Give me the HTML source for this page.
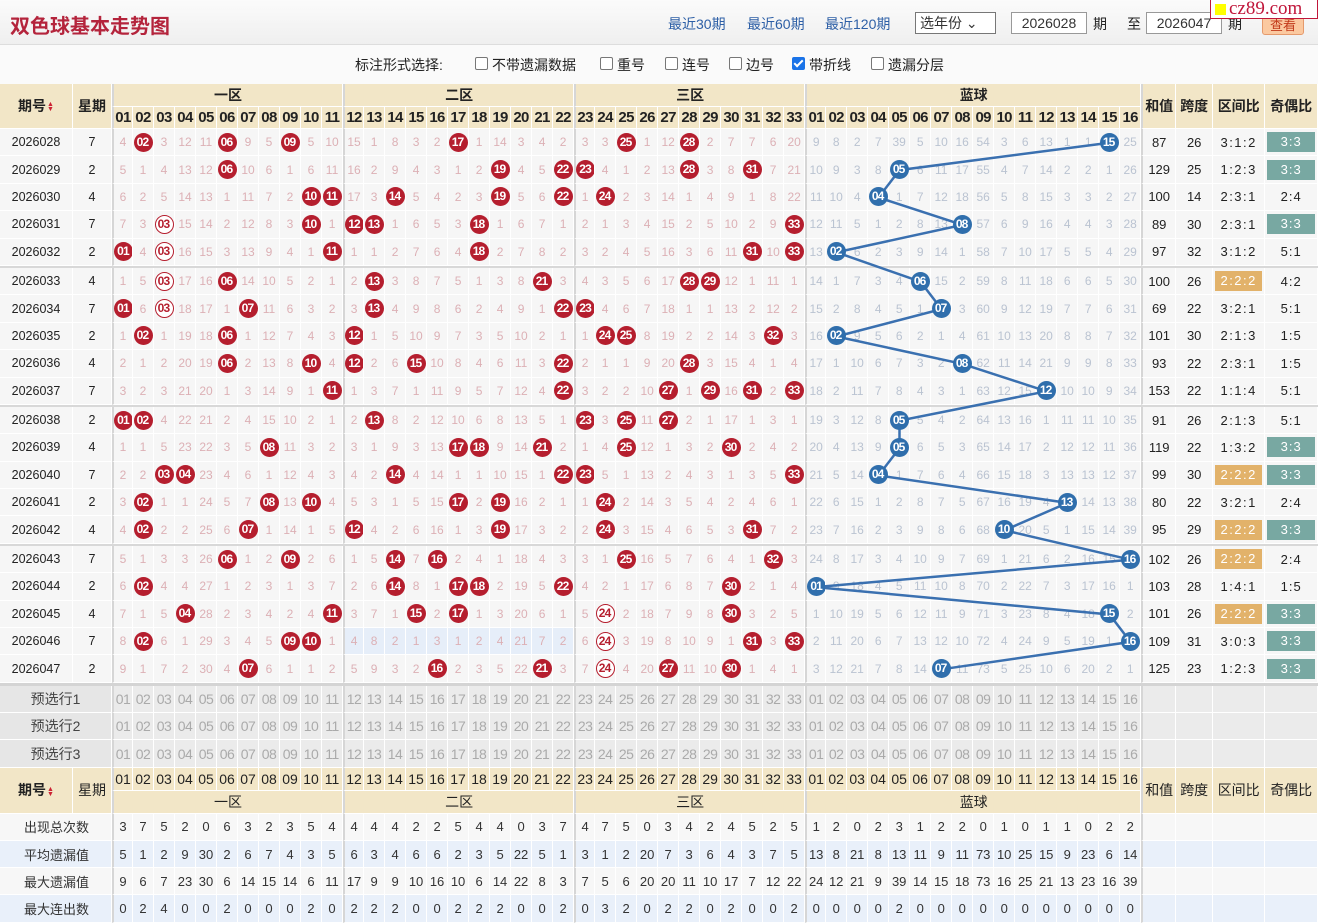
<!DOCTYPE html>
<html><head><meta charset="utf-8">
<style>
body{margin:0;width:1318px;height:923px;overflow:hidden;background:#fff;font-family:"Liberation Sans","Noto Sans CJK SC",sans-serif;position:relative;color:#333}
#top{position:absolute;left:0;top:0;width:1318px;height:44px;background:linear-gradient(#fbfbfb,#efefef);border-bottom:1px solid #ddd}
#title{position:absolute;left:10px;top:10px;font-size:20px;font-weight:bold;color:#b4243c;letter-spacing:0px}
.lk{position:absolute;top:14px;font-size:14px;color:#2d5fa6}
.sel{position:absolute;left:915px;top:12px;width:75px;height:20px;border:1px solid #777;background:#fff;font-size:14px;line-height:20px;padding-left:4px;box-sizing:content-box}
.inp{position:absolute;top:12px;width:74px;height:20px;border:1px solid #999;background:#fff;font-size:14px;line-height:20px;text-align:center}
.tx{position:absolute;top:14px;font-size:14px;color:#222}
#btn{position:absolute;left:1262px;top:16px;width:40px;height:17px;background:#fbc9a0;border:1px solid #e59a6c;border-radius:3px;color:#c23a1a;font-size:13px;text-align:center;line-height:17px}
#wm{position:absolute;left:1210px;top:0;width:106px;height:18px;background:#fff;border:1px solid #c0163a;border-top:none;color:#c0163a;font-family:"Liberation Serif",serif;font-size:19px;line-height:18px}
#wm .sq{display:inline-block;width:11px;height:11px;background:#ff0;margin:0 3px 0 4px;vertical-align:-1px}
#opt{position:absolute;left:0;top:45px;width:1318px;height:39px;background:#fafafa;font-size:14px;color:#222}
#opt span{position:absolute;top:10px}
.cb{display:inline-block;width:11px;height:11px;border:1px solid #777;border-radius:2px;background:#fff;vertical-align:0px;margin-right:4px;font-style:normal;position:relative}
.cb.on{background:#1a73e8;border-color:#1a73e8}
.cb.on:after{content:"";position:absolute;left:3px;top:0px;width:3px;height:7px;border:solid #fff;border-width:0 2px 2px 0;transform:rotate(45deg)}
table{position:absolute;left:0;top:84px;border-collapse:separate;border-spacing:0;table-layout:fixed;width:1318px}
td{padding:0;text-align:center;overflow:hidden;white-space:nowrap;border-right:1px solid #fff;border-bottom:1px solid #fff;font-size:12px}
tr.h td{background:#f2e6c7;font-weight:bold;font-size:14px;color:#222}
tr.h2 td{font-size:15px;letter-spacing:-0.6px}
tr.d{height:27.4px}
tr.d td{background:#f6f6f6;color:#dcb0b5;font-size:12px;border-right:1px solid #fff;border-bottom:1px solid #fff}
tr.d td:nth-child(1),tr.d td:nth-child(2){color:#222;font-size:12.5px}
tr.d td:nth-child(n+36):nth-child(-n+51){color:#bac3d1}
tr.d td:nth-child(n+52){color:#222;font-size:13px}
tr.d td:nth-child(54){letter-spacing:1.5px}
tr.d td:nth-child(55){letter-spacing:1px}
tr.d td:nth-child(3),tr.d td:nth-child(14),tr.d td:nth-child(25),tr.d td:nth-child(36),tr.d td:nth-child(52){border-left:2px solid #d6d6d6}
tr.sp td{height:2px;background:#d8d8d8;border:none}
tr.sp3 td{height:3px;background:#d4d4d4;border:none}
tr.p{height:27.3px}
tr.p td{background:#ebebeb;color:#aaa;font-size:14px;letter-spacing:-0.5px}
tr.p td:first-child{color:#444;background:#e6e6e6;letter-spacing:0}
tr.p td:nth-child(2),tr.p td:nth-child(13),tr.p td:nth-child(24),tr.p td:nth-child(35),tr.p td:nth-child(51),
tr.s td:nth-child(2),tr.s td:nth-child(13),tr.s td:nth-child(24),tr.s td:nth-child(35),tr.s td:nth-child(51){border-left:2px solid #d6d6d6}
tr.s{height:27.25px}
tr.s td{background:#f7f7f7;color:#333;font-size:13px}
tr.s.b td{background:#e9f0fa}
tr.s td:first-child{text-align:left;padding-left:24px}
tr.bh td{background:#f2e6c7;color:#222;font-size:14px}
.zl{border-left:2px solid #d6d6d6!important}
.sh{background:#e6eef9!important}
b,i,u{display:inline-block;width:19px;height:19px;border-radius:50%;line-height:19px;font-size:12px;font-weight:bold;font-style:normal;text-decoration:none;letter-spacing:-0.8px;text-indent:-1px;vertical-align:middle;position:relative;z-index:2}
b{background:#b51e2e;color:#fff}
i{background:#fff;color:#b51e2e;border:1.5px solid #b51e2e;width:17px;height:17px;line-height:17px}
u{background:#2f6eac;color:#fff}
.g,.o{display:block;margin:0 2px;height:20px;line-height:20px;color:#fff}
.g{background:#78a8a2}
.o{background:#e2b26a}
svg{position:absolute;left:0;top:0;z-index:1;pointer-events:none}
.ar{display:inline-block;width:7px;vertical-align:middle;line-height:5px;font-size:7px;color:#c23;margin-left:1px}
</style></head><body>
<div id="top">
<div id="title">双色球基本走势图</div>
<span class="lk" style="left:668px">最近30期</span>
<span class="lk" style="left:747px">最近60期</span>
<span class="lk" style="left:825px">最近120期</span>
<div class="sel">选年份 ⌄</div>
<div class="inp" style="left:1011px">2026028</div>
<span class="tx" style="left:1093px">期</span>
<span class="tx" style="left:1127px">至</span>
<div class="inp" style="left:1146px">2026047</div>
<span class="tx" style="left:1228px">期</span>
<div id="btn">查看</div>
<div id="wm"><span class="sq"></span>cz89.com</div>
</div>
<div id="opt">
<span style="left:355px">标注形式选择:</span>
<span style="left:475px"><em class="cb"></em>不带遗漏数据</span>
<span style="left:600px"><em class="cb"></em>重号</span>
<span style="left:665px"><em class="cb"></em>连号</span>
<span style="left:729px"><em class="cb"></em>边号</span>
<span style="left:792px"><em class="cb on"></em>带折线</span>
<span style="left:871px"><em class="cb"></em>遗漏分层</span>
</div>
<table>
<colgroup><col style="width:73px"><col style="width:39px">
<col style="width:21px"><col style="width:21px"><col style="width:21px"><col style="width:21px"><col style="width:21px"><col style="width:21px"><col style="width:21px"><col style="width:21px"><col style="width:21px"><col style="width:21px"><col style="width:21px">
<col style="width:21px"><col style="width:21px"><col style="width:21px"><col style="width:21px"><col style="width:21px"><col style="width:21px"><col style="width:21px"><col style="width:21px"><col style="width:21px"><col style="width:21px"><col style="width:21px">
<col style="width:21px"><col style="width:21px"><col style="width:21px"><col style="width:21px"><col style="width:21px"><col style="width:21px"><col style="width:21px"><col style="width:21px"><col style="width:21px"><col style="width:21px"><col style="width:21px">
<col style="width:21px"><col style="width:21px"><col style="width:21px"><col style="width:21px"><col style="width:21px"><col style="width:21px"><col style="width:21px"><col style="width:21px"><col style="width:21px"><col style="width:21px"><col style="width:21px"><col style="width:21px"><col style="width:21px"><col style="width:21px"><col style="width:21px"><col style="width:21px">
<col style="width:35px"><col style="width:37px"><col style="width:52px"><col style="width:53px"></colgroup>
<tr class="h" style="height:22.5px"><td rowspan="2">期号<span class="ar">▲<br>▼</span></td><td rowspan="2">星期</td><td colspan="11" class="zl">一区</td><td colspan="11" class="zl">二区</td><td colspan="11" class="zl">三区</td><td colspan="16" class="zl">蓝球</td><td rowspan="2" class="zl">和值</td><td rowspan="2">跨度</td><td rowspan="2">区间比</td><td rowspan="2">奇偶比</td></tr>
<tr class="h h2" style="height:22.5px"><td class="zl">01</td><td>02</td><td>03</td><td>04</td><td>05</td><td>06</td><td>07</td><td>08</td><td>09</td><td>10</td><td>11</td><td class="zl">12</td><td>13</td><td>14</td><td>15</td><td>16</td><td>17</td><td>18</td><td>19</td><td>20</td><td>21</td><td>22</td><td class="zl">23</td><td>24</td><td>25</td><td>26</td><td>27</td><td>28</td><td>29</td><td>30</td><td>31</td><td>32</td><td>33</td><td class="zl">01</td><td>02</td><td>03</td><td>04</td><td>05</td><td>06</td><td>07</td><td>08</td><td>09</td><td>10</td><td>11</td><td>12</td><td>13</td><td>14</td><td>15</td><td>16</td></tr>
<tr class="d"><td>2026028</td><td>7</td><td>4</td><td><b>02</b></td><td>3</td><td>12</td><td>11</td><td><b>06</b></td><td>9</td><td>5</td><td><b>09</b></td><td>5</td><td>10</td><td>15</td><td>1</td><td>8</td><td>3</td><td>2</td><td><b>17</b></td><td>1</td><td>14</td><td>3</td><td>4</td><td>2</td><td>3</td><td>3</td><td><b>25</b></td><td>1</td><td>12</td><td><b>28</b></td><td>2</td><td>7</td><td>7</td><td>6</td><td>20</td><td>9</td><td>8</td><td>2</td><td>7</td><td>39</td><td>5</td><td>10</td><td>16</td><td>54</td><td>3</td><td>6</td><td>13</td><td>1</td><td>1</td><td><u>15</u></td><td>25</td><td>87</td><td>26</td><td>3:1:2</td><td><span class="g">3:3</span></td></tr>
<tr class="d"><td>2026029</td><td>2</td><td>5</td><td>1</td><td>4</td><td>13</td><td>12</td><td><b>06</b></td><td>10</td><td>6</td><td>1</td><td>6</td><td>11</td><td>16</td><td>2</td><td>9</td><td>4</td><td>3</td><td>1</td><td>2</td><td><b>19</b></td><td>4</td><td>5</td><td><b>22</b></td><td><b>23</b></td><td>4</td><td>1</td><td>2</td><td>13</td><td><b>28</b></td><td>3</td><td>8</td><td><b>31</b></td><td>7</td><td>21</td><td>10</td><td>9</td><td>3</td><td>8</td><td><u>05</u></td><td>6</td><td>11</td><td>17</td><td>55</td><td>4</td><td>7</td><td>14</td><td>2</td><td>2</td><td>1</td><td>26</td><td>129</td><td>25</td><td>1:2:3</td><td><span class="g">3:3</span></td></tr>
<tr class="d"><td>2026030</td><td>4</td><td>6</td><td>2</td><td>5</td><td>14</td><td>13</td><td>1</td><td>11</td><td>7</td><td>2</td><td><b>10</b></td><td><b>11</b></td><td>17</td><td>3</td><td><b>14</b></td><td>5</td><td>4</td><td>2</td><td>3</td><td><b>19</b></td><td>5</td><td>6</td><td><b>22</b></td><td>1</td><td><b>24</b></td><td>2</td><td>3</td><td>14</td><td>1</td><td>4</td><td>9</td><td>1</td><td>8</td><td>22</td><td>11</td><td>10</td><td>4</td><td><u>04</u></td><td>1</td><td>7</td><td>12</td><td>18</td><td>56</td><td>5</td><td>8</td><td>15</td><td>3</td><td>3</td><td>2</td><td>27</td><td>100</td><td>14</td><td>2:3:1</td><td>2:4</td></tr>
<tr class="d"><td>2026031</td><td>7</td><td>7</td><td>3</td><td><i>03</i></td><td>15</td><td>14</td><td>2</td><td>12</td><td>8</td><td>3</td><td><b>10</b></td><td>1</td><td><b>12</b></td><td><b>13</b></td><td>1</td><td>6</td><td>5</td><td>3</td><td><b>18</b></td><td>1</td><td>6</td><td>7</td><td>1</td><td>2</td><td>1</td><td>3</td><td>4</td><td>15</td><td>2</td><td>5</td><td>10</td><td>2</td><td>9</td><td><b>33</b></td><td>12</td><td>11</td><td>5</td><td>1</td><td>2</td><td>8</td><td>13</td><td><u>08</u></td><td>57</td><td>6</td><td>9</td><td>16</td><td>4</td><td>4</td><td>3</td><td>28</td><td>89</td><td>30</td><td>2:3:1</td><td><span class="g">3:3</span></td></tr>
<tr class="d"><td>2026032</td><td>2</td><td><b>01</b></td><td>4</td><td><i>03</i></td><td>16</td><td>15</td><td>3</td><td>13</td><td>9</td><td>4</td><td>1</td><td><b>11</b></td><td>1</td><td>1</td><td>2</td><td>7</td><td>6</td><td>4</td><td><b>18</b></td><td>2</td><td>7</td><td>8</td><td>2</td><td>3</td><td>2</td><td>4</td><td>5</td><td>16</td><td>3</td><td>6</td><td>11</td><td><b>31</b></td><td>10</td><td><b>33</b></td><td>13</td><td><u>02</u></td><td>6</td><td>2</td><td>3</td><td>9</td><td>14</td><td>1</td><td>58</td><td>7</td><td>10</td><td>17</td><td>5</td><td>5</td><td>4</td><td>29</td><td>97</td><td>32</td><td>3:1:2</td><td>5:1</td></tr>
<tr class="sp"><td colspan="55"></td></tr>
<tr class="d"><td>2026033</td><td>4</td><td>1</td><td>5</td><td><i>03</i></td><td>17</td><td>16</td><td><b>06</b></td><td>14</td><td>10</td><td>5</td><td>2</td><td>1</td><td>2</td><td><b>13</b></td><td>3</td><td>8</td><td>7</td><td>5</td><td>1</td><td>3</td><td>8</td><td><b>21</b></td><td>3</td><td>4</td><td>3</td><td>5</td><td>6</td><td>17</td><td><b>28</b></td><td><b>29</b></td><td>12</td><td>1</td><td>11</td><td>1</td><td>14</td><td>1</td><td>7</td><td>3</td><td>4</td><td><u>06</u></td><td>15</td><td>2</td><td>59</td><td>8</td><td>11</td><td>18</td><td>6</td><td>6</td><td>5</td><td>30</td><td>100</td><td>26</td><td><span class="o">2:2:2</span></td><td>4:2</td></tr>
<tr class="d"><td>2026034</td><td>7</td><td><b>01</b></td><td>6</td><td><i>03</i></td><td>18</td><td>17</td><td>1</td><td><b>07</b></td><td>11</td><td>6</td><td>3</td><td>2</td><td>3</td><td><b>13</b></td><td>4</td><td>9</td><td>8</td><td>6</td><td>2</td><td>4</td><td>9</td><td>1</td><td><b>22</b></td><td><b>23</b></td><td>4</td><td>6</td><td>7</td><td>18</td><td>1</td><td>1</td><td>13</td><td>2</td><td>12</td><td>2</td><td>15</td><td>2</td><td>8</td><td>4</td><td>5</td><td>1</td><td><u>07</u></td><td>3</td><td>60</td><td>9</td><td>12</td><td>19</td><td>7</td><td>7</td><td>6</td><td>31</td><td>69</td><td>22</td><td>3:2:1</td><td>5:1</td></tr>
<tr class="d"><td>2026035</td><td>2</td><td>1</td><td><b>02</b></td><td>1</td><td>19</td><td>18</td><td><b>06</b></td><td>1</td><td>12</td><td>7</td><td>4</td><td>3</td><td><b>12</b></td><td>1</td><td>5</td><td>10</td><td>9</td><td>7</td><td>3</td><td>5</td><td>10</td><td>2</td><td>1</td><td>1</td><td><b>24</b></td><td><b>25</b></td><td>8</td><td>19</td><td>2</td><td>2</td><td>14</td><td>3</td><td><b>32</b></td><td>3</td><td>16</td><td><u>02</u></td><td>9</td><td>5</td><td>6</td><td>2</td><td>1</td><td>4</td><td>61</td><td>10</td><td>13</td><td>20</td><td>8</td><td>8</td><td>7</td><td>32</td><td>101</td><td>30</td><td>2:1:3</td><td>1:5</td></tr>
<tr class="d"><td>2026036</td><td>4</td><td>2</td><td>1</td><td>2</td><td>20</td><td>19</td><td><b>06</b></td><td>2</td><td>13</td><td>8</td><td><b>10</b></td><td>4</td><td><b>12</b></td><td>2</td><td>6</td><td><b>15</b></td><td>10</td><td>8</td><td>4</td><td>6</td><td>11</td><td>3</td><td><b>22</b></td><td>2</td><td>1</td><td>1</td><td>9</td><td>20</td><td><b>28</b></td><td>3</td><td>15</td><td>4</td><td>1</td><td>4</td><td>17</td><td>1</td><td>10</td><td>6</td><td>7</td><td>3</td><td>2</td><td><u>08</u></td><td>62</td><td>11</td><td>14</td><td>21</td><td>9</td><td>9</td><td>8</td><td>33</td><td>93</td><td>22</td><td>2:3:1</td><td>1:5</td></tr>
<tr class="d"><td>2026037</td><td>7</td><td>3</td><td>2</td><td>3</td><td>21</td><td>20</td><td>1</td><td>3</td><td>14</td><td>9</td><td>1</td><td><b>11</b></td><td>1</td><td>3</td><td>7</td><td>1</td><td>11</td><td>9</td><td>5</td><td>7</td><td>12</td><td>4</td><td><b>22</b></td><td>3</td><td>2</td><td>2</td><td>10</td><td><b>27</b></td><td>1</td><td><b>29</b></td><td>16</td><td><b>31</b></td><td>2</td><td><b>33</b></td><td>18</td><td>2</td><td>11</td><td>7</td><td>8</td><td>4</td><td>3</td><td>1</td><td>63</td><td>12</td><td>15</td><td><u>12</u></td><td>10</td><td>10</td><td>9</td><td>34</td><td>153</td><td>22</td><td>1:1:4</td><td>5:1</td></tr>
<tr class="sp"><td colspan="55"></td></tr>
<tr class="d"><td>2026038</td><td>2</td><td><b>01</b></td><td><b>02</b></td><td>4</td><td>22</td><td>21</td><td>2</td><td>4</td><td>15</td><td>10</td><td>2</td><td>1</td><td>2</td><td><b>13</b></td><td>8</td><td>2</td><td>12</td><td>10</td><td>6</td><td>8</td><td>13</td><td>5</td><td>1</td><td><b>23</b></td><td>3</td><td><b>25</b></td><td>11</td><td><b>27</b></td><td>2</td><td>1</td><td>17</td><td>1</td><td>3</td><td>1</td><td>19</td><td>3</td><td>12</td><td>8</td><td><u>05</u></td><td>5</td><td>4</td><td>2</td><td>64</td><td>13</td><td>16</td><td>1</td><td>11</td><td>11</td><td>10</td><td>35</td><td>91</td><td>26</td><td>2:1:3</td><td>5:1</td></tr>
<tr class="d"><td>2026039</td><td>4</td><td>1</td><td>1</td><td>5</td><td>23</td><td>22</td><td>3</td><td>5</td><td><b>08</b></td><td>11</td><td>3</td><td>2</td><td>3</td><td>1</td><td>9</td><td>3</td><td>13</td><td><b>17</b></td><td><b>18</b></td><td>9</td><td>14</td><td><b>21</b></td><td>2</td><td>1</td><td>4</td><td><b>25</b></td><td>12</td><td>1</td><td>3</td><td>2</td><td><b>30</b></td><td>2</td><td>4</td><td>2</td><td>20</td><td>4</td><td>13</td><td>9</td><td><u>05</u></td><td>6</td><td>5</td><td>3</td><td>65</td><td>14</td><td>17</td><td>2</td><td>12</td><td>12</td><td>11</td><td>36</td><td>119</td><td>22</td><td>1:3:2</td><td><span class="g">3:3</span></td></tr>
<tr class="d"><td>2026040</td><td>7</td><td>2</td><td>2</td><td><b>03</b></td><td><b>04</b></td><td>23</td><td>4</td><td>6</td><td>1</td><td>12</td><td>4</td><td>3</td><td>4</td><td>2</td><td><b>14</b></td><td>4</td><td>14</td><td>1</td><td>1</td><td>10</td><td>15</td><td>1</td><td><b>22</b></td><td><b>23</b></td><td>5</td><td>1</td><td>13</td><td>2</td><td>4</td><td>3</td><td>1</td><td>3</td><td>5</td><td><b>33</b></td><td>21</td><td>5</td><td>14</td><td><u>04</u></td><td>1</td><td>7</td><td>6</td><td>4</td><td>66</td><td>15</td><td>18</td><td>3</td><td>13</td><td>13</td><td>12</td><td>37</td><td>99</td><td>30</td><td><span class="o">2:2:2</span></td><td><span class="g">3:3</span></td></tr>
<tr class="d"><td>2026041</td><td>2</td><td>3</td><td><b>02</b></td><td>1</td><td>1</td><td>24</td><td>5</td><td>7</td><td><b>08</b></td><td>13</td><td><b>10</b></td><td>4</td><td>5</td><td>3</td><td>1</td><td>5</td><td>15</td><td><b>17</b></td><td>2</td><td><b>19</b></td><td>16</td><td>2</td><td>1</td><td>1</td><td><b>24</b></td><td>2</td><td>14</td><td>3</td><td>5</td><td>4</td><td>2</td><td>4</td><td>6</td><td>1</td><td>22</td><td>6</td><td>15</td><td>1</td><td>2</td><td>8</td><td>7</td><td>5</td><td>67</td><td>16</td><td>19</td><td>4</td><td><u>13</u></td><td>14</td><td>13</td><td>38</td><td>80</td><td>22</td><td>3:2:1</td><td>2:4</td></tr>
<tr class="d"><td>2026042</td><td>4</td><td>4</td><td><b>02</b></td><td>2</td><td>2</td><td>25</td><td>6</td><td><b>07</b></td><td>1</td><td>14</td><td>1</td><td>5</td><td><b>12</b></td><td>4</td><td>2</td><td>6</td><td>16</td><td>1</td><td>3</td><td><b>19</b></td><td>17</td><td>3</td><td>2</td><td>2</td><td><b>24</b></td><td>3</td><td>15</td><td>4</td><td>6</td><td>5</td><td>3</td><td><b>31</b></td><td>7</td><td>2</td><td>23</td><td>7</td><td>16</td><td>2</td><td>3</td><td>9</td><td>8</td><td>6</td><td>68</td><td><u>10</u></td><td>20</td><td>5</td><td>1</td><td>15</td><td>14</td><td>39</td><td>95</td><td>29</td><td><span class="o">2:2:2</span></td><td><span class="g">3:3</span></td></tr>
<tr class="sp"><td colspan="55"></td></tr>
<tr class="d"><td>2026043</td><td>7</td><td>5</td><td>1</td><td>3</td><td>3</td><td>26</td><td><b>06</b></td><td>1</td><td>2</td><td><b>09</b></td><td>2</td><td>6</td><td>1</td><td>5</td><td><b>14</b></td><td>7</td><td><b>16</b></td><td>2</td><td>4</td><td>1</td><td>18</td><td>4</td><td>3</td><td>3</td><td>1</td><td><b>25</b></td><td>16</td><td>5</td><td>7</td><td>6</td><td>4</td><td>1</td><td><b>32</b></td><td>3</td><td>24</td><td>8</td><td>17</td><td>3</td><td>4</td><td>10</td><td>9</td><td>7</td><td>69</td><td>1</td><td>21</td><td>6</td><td>2</td><td>16</td><td>15</td><td><u>16</u></td><td>102</td><td>26</td><td><span class="o">2:2:2</span></td><td>2:4</td></tr>
<tr class="d"><td>2026044</td><td>2</td><td>6</td><td><b>02</b></td><td>4</td><td>4</td><td>27</td><td>1</td><td>2</td><td>3</td><td>1</td><td>3</td><td>7</td><td>2</td><td>6</td><td><b>14</b></td><td>8</td><td>1</td><td><b>17</b></td><td><b>18</b></td><td>2</td><td>19</td><td>5</td><td><b>22</b></td><td>4</td><td>2</td><td>1</td><td>17</td><td>6</td><td>8</td><td>7</td><td><b>30</b></td><td>2</td><td>1</td><td>4</td><td><u>01</u></td><td>9</td><td>18</td><td>4</td><td>5</td><td>11</td><td>10</td><td>8</td><td>70</td><td>2</td><td>22</td><td>7</td><td>3</td><td>17</td><td>16</td><td>1</td><td>103</td><td>28</td><td>1:4:1</td><td>1:5</td></tr>
<tr class="d"><td>2026045</td><td>4</td><td>7</td><td>1</td><td>5</td><td><b>04</b></td><td>28</td><td>2</td><td>3</td><td>4</td><td>2</td><td>4</td><td><b>11</b></td><td>3</td><td>7</td><td>1</td><td><b>15</b></td><td>2</td><td><b>17</b></td><td>1</td><td>3</td><td>20</td><td>6</td><td>1</td><td>5</td><td><i>24</i></td><td>2</td><td>18</td><td>7</td><td>9</td><td>8</td><td><b>30</b></td><td>3</td><td>2</td><td>5</td><td>1</td><td>10</td><td>19</td><td>5</td><td>6</td><td>12</td><td>11</td><td>9</td><td>71</td><td>3</td><td>23</td><td>8</td><td>4</td><td>18</td><td><u>15</u></td><td>2</td><td>101</td><td>26</td><td><span class="o">2:2:2</span></td><td><span class="g">3:3</span></td></tr>
<tr class="d"><td>2026046</td><td>7</td><td>8</td><td><b>02</b></td><td>6</td><td>1</td><td>29</td><td>3</td><td>4</td><td>5</td><td><b>09</b></td><td><b>10</b></td><td>1</td><td class="sh">4</td><td class="sh">8</td><td class="sh">2</td><td class="sh">1</td><td class="sh">3</td><td class="sh">1</td><td class="sh">2</td><td class="sh">4</td><td class="sh">21</td><td class="sh">7</td><td class="sh">2</td><td>6</td><td><i>24</i></td><td>3</td><td>19</td><td>8</td><td>10</td><td>9</td><td>1</td><td><b>31</b></td><td>3</td><td><b>33</b></td><td>2</td><td>11</td><td>20</td><td>6</td><td>7</td><td>13</td><td>12</td><td>10</td><td>72</td><td>4</td><td>24</td><td>9</td><td>5</td><td>19</td><td>1</td><td><u>16</u></td><td>109</td><td>31</td><td>3:0:3</td><td><span class="g">3:3</span></td></tr>
<tr class="d"><td>2026047</td><td>2</td><td>9</td><td>1</td><td>7</td><td>2</td><td>30</td><td>4</td><td><b>07</b></td><td>6</td><td>1</td><td>1</td><td>2</td><td>5</td><td>9</td><td>3</td><td>2</td><td><b>16</b></td><td>2</td><td>3</td><td>5</td><td>22</td><td><b>21</b></td><td>3</td><td>7</td><td><i>24</i></td><td>4</td><td>20</td><td><b>27</b></td><td>11</td><td>10</td><td><b>30</b></td><td>1</td><td>4</td><td>1</td><td>3</td><td>12</td><td>21</td><td>7</td><td>8</td><td>14</td><td><u>07</u></td><td>11</td><td>73</td><td>5</td><td>25</td><td>10</td><td>6</td><td>20</td><td>2</td><td>1</td><td>125</td><td>23</td><td>1:2:3</td><td><span class="g">3:3</span></td></tr>
<tr class="sp3"><td colspan="55"></td></tr>
<tr class="p"><td colspan="2">预选行1</td><td>01</td><td>02</td><td>03</td><td>04</td><td>05</td><td>06</td><td>07</td><td>08</td><td>09</td><td>10</td><td>11</td><td>12</td><td>13</td><td>14</td><td>15</td><td>16</td><td>17</td><td>18</td><td>19</td><td>20</td><td>21</td><td>22</td><td>23</td><td>24</td><td>25</td><td>26</td><td>27</td><td>28</td><td>29</td><td>30</td><td>31</td><td>32</td><td>33</td><td>01</td><td>02</td><td>03</td><td>04</td><td>05</td><td>06</td><td>07</td><td>08</td><td>09</td><td>10</td><td>11</td><td>12</td><td>13</td><td>14</td><td>15</td><td>16</td><td></td><td></td><td></td><td></td></tr>
<tr class="p"><td colspan="2">预选行2</td><td>01</td><td>02</td><td>03</td><td>04</td><td>05</td><td>06</td><td>07</td><td>08</td><td>09</td><td>10</td><td>11</td><td>12</td><td>13</td><td>14</td><td>15</td><td>16</td><td>17</td><td>18</td><td>19</td><td>20</td><td>21</td><td>22</td><td>23</td><td>24</td><td>25</td><td>26</td><td>27</td><td>28</td><td>29</td><td>30</td><td>31</td><td>32</td><td>33</td><td>01</td><td>02</td><td>03</td><td>04</td><td>05</td><td>06</td><td>07</td><td>08</td><td>09</td><td>10</td><td>11</td><td>12</td><td>13</td><td>14</td><td>15</td><td>16</td><td></td><td></td><td></td><td></td></tr>
<tr class="p"><td colspan="2">预选行3</td><td>01</td><td>02</td><td>03</td><td>04</td><td>05</td><td>06</td><td>07</td><td>08</td><td>09</td><td>10</td><td>11</td><td>12</td><td>13</td><td>14</td><td>15</td><td>16</td><td>17</td><td>18</td><td>19</td><td>20</td><td>21</td><td>22</td><td>23</td><td>24</td><td>25</td><td>26</td><td>27</td><td>28</td><td>29</td><td>30</td><td>31</td><td>32</td><td>33</td><td>01</td><td>02</td><td>03</td><td>04</td><td>05</td><td>06</td><td>07</td><td>08</td><td>09</td><td>10</td><td>11</td><td>12</td><td>13</td><td>14</td><td>15</td><td>16</td><td></td><td></td><td></td><td></td></tr>
<tr class="bh" style="height:23px"><td rowspan="2" style="font-weight:bold">期号<span class="ar">▲<br>▼</span></td><td rowspan="2">星期</td><td class="zl">01</td><td>02</td><td>03</td><td>04</td><td>05</td><td>06</td><td>07</td><td>08</td><td>09</td><td>10</td><td>11</td><td class="zl">12</td><td>13</td><td>14</td><td>15</td><td>16</td><td>17</td><td>18</td><td>19</td><td>20</td><td>21</td><td>22</td><td class="zl">23</td><td>24</td><td>25</td><td>26</td><td>27</td><td>28</td><td>29</td><td>30</td><td>31</td><td>32</td><td>33</td><td class="zl">01</td><td>02</td><td>03</td><td>04</td><td>05</td><td>06</td><td>07</td><td>08</td><td>09</td><td>10</td><td>11</td><td>12</td><td>13</td><td>14</td><td>15</td><td>16</td><td rowspan="2" class="zl">和值</td><td rowspan="2">跨度</td><td rowspan="2">区间比</td><td rowspan="2">奇偶比</td></tr>
<tr class="bh" style="height:23px"><td colspan="11" class="zl">一区</td><td colspan="11" class="zl">二区</td><td colspan="11" class="zl">三区</td><td colspan="16" class="zl">蓝球</td></tr>
<tr class="s"><td colspan="2">出现总次数</td><td>3</td><td>7</td><td>5</td><td>2</td><td>0</td><td>6</td><td>3</td><td>2</td><td>3</td><td>5</td><td>4</td><td>4</td><td>4</td><td>4</td><td>2</td><td>2</td><td>5</td><td>4</td><td>4</td><td>0</td><td>3</td><td>7</td><td>4</td><td>7</td><td>5</td><td>0</td><td>3</td><td>4</td><td>2</td><td>4</td><td>5</td><td>2</td><td>5</td><td>1</td><td>2</td><td>0</td><td>2</td><td>3</td><td>1</td><td>2</td><td>2</td><td>0</td><td>1</td><td>0</td><td>1</td><td>1</td><td>0</td><td>2</td><td>2</td><td></td><td></td><td></td><td></td></tr>
<tr class="s b"><td colspan="2">平均遗漏值</td><td>5</td><td>1</td><td>2</td><td>9</td><td>30</td><td>2</td><td>6</td><td>7</td><td>4</td><td>3</td><td>5</td><td>6</td><td>3</td><td>4</td><td>6</td><td>6</td><td>2</td><td>3</td><td>5</td><td>22</td><td>5</td><td>1</td><td>3</td><td>1</td><td>2</td><td>20</td><td>7</td><td>3</td><td>6</td><td>4</td><td>3</td><td>7</td><td>5</td><td>13</td><td>8</td><td>21</td><td>8</td><td>13</td><td>11</td><td>9</td><td>11</td><td>73</td><td>10</td><td>25</td><td>15</td><td>9</td><td>23</td><td>6</td><td>14</td><td></td><td></td><td></td><td></td></tr>
<tr class="s"><td colspan="2">最大遗漏值</td><td>9</td><td>6</td><td>7</td><td>23</td><td>30</td><td>6</td><td>14</td><td>15</td><td>14</td><td>6</td><td>11</td><td>17</td><td>9</td><td>9</td><td>10</td><td>16</td><td>10</td><td>6</td><td>14</td><td>22</td><td>8</td><td>3</td><td>7</td><td>5</td><td>6</td><td>20</td><td>20</td><td>11</td><td>10</td><td>17</td><td>7</td><td>12</td><td>22</td><td>24</td><td>12</td><td>21</td><td>9</td><td>39</td><td>14</td><td>15</td><td>18</td><td>73</td><td>16</td><td>25</td><td>21</td><td>13</td><td>23</td><td>16</td><td>39</td><td></td><td></td><td></td><td></td></tr>
<tr class="s b"><td colspan="2">最大连出数</td><td>0</td><td>2</td><td>4</td><td>0</td><td>0</td><td>2</td><td>0</td><td>0</td><td>0</td><td>2</td><td>0</td><td>2</td><td>2</td><td>2</td><td>0</td><td>0</td><td>2</td><td>2</td><td>2</td><td>0</td><td>0</td><td>2</td><td>0</td><td>3</td><td>2</td><td>0</td><td>2</td><td>2</td><td>0</td><td>2</td><td>0</td><td>0</td><td>2</td><td>0</td><td>0</td><td>0</td><td>0</td><td>2</td><td>0</td><td>0</td><td>0</td><td>0</td><td>0</td><td>0</td><td>0</td><td>0</td><td>0</td><td>0</td><td>0</td><td></td><td></td><td></td><td></td></tr>
</table>
<svg width="1318" height="923"><polyline fill="none" stroke="#3a70b0" stroke-width="2.5" points="1109.5,142.7 899.5,170.1 878.5,197.5 962.5,224.9 836.5,252.3 920.5,281.7 941.5,309.1 836.5,336.5 962.5,363.9 1046.5,391.3 899.5,420.7 899.5,448.1 878.5,475.5 1067.5,502.9 1004.5,530.3 1130.5,559.7 815.5,587.1 1109.5,614.5 1130.5,641.9 941.5,669.3"/></svg>
</body></html>
